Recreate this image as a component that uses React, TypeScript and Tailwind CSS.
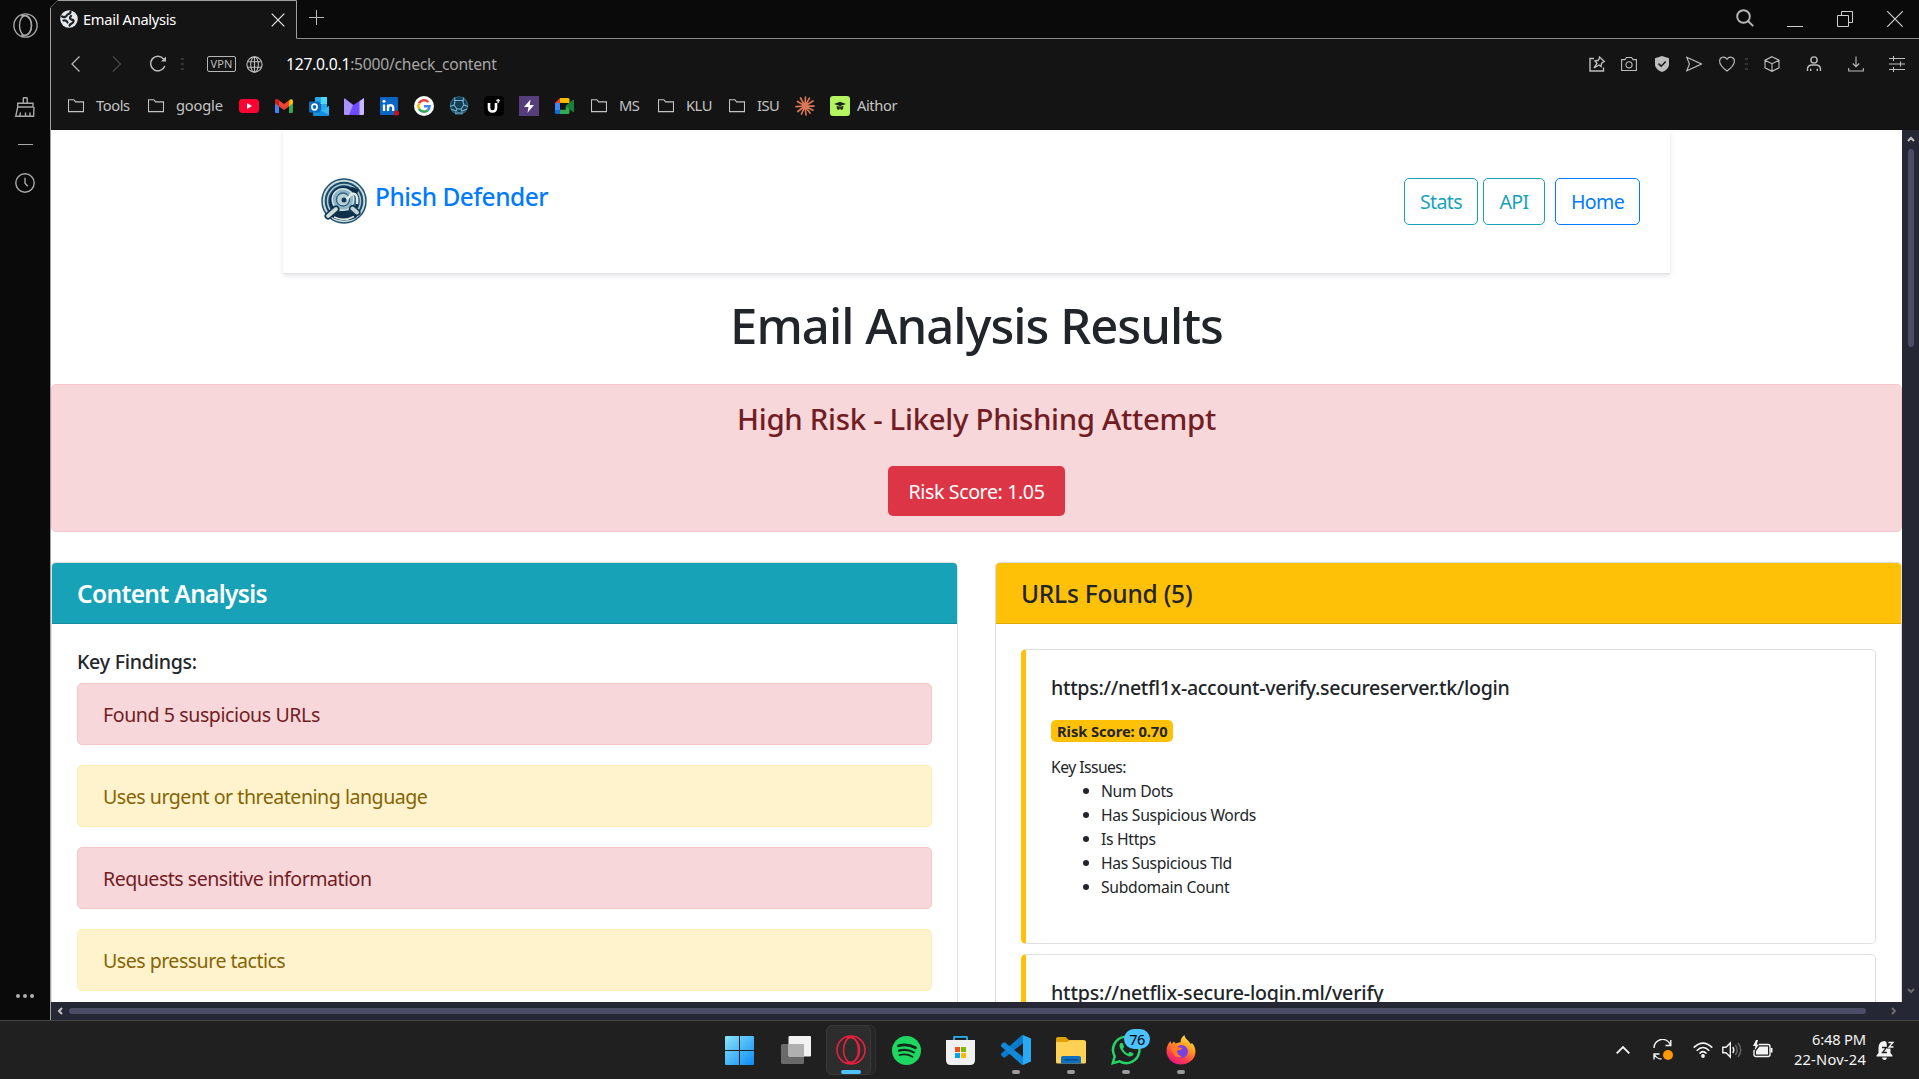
import type { ReactNode } from 'react';

function Icon({ s = 16, vb = '0 0 16 16', className = '', w = 1.1, children }: { s?: number; vb?: string; className?: string; w?: number; children: ReactNode }) {
  return (
    <svg width={s} height={s} viewBox={vb} fill="none" stroke="currentColor" strokeWidth={w} className={'block shrink-0 ' + className}>
      {children}
    </svg>
  );
}

const Folder = () => (
  <Icon>
    <path d="M.5 3.2V13.6H15.5V3.9H7.6L5.9 1.7H.5Z" />
  </Icon>
);

const Dots = ({ className }: { className: string }) => (
  <div className={'flex w-[3px] shrink-0 flex-col gap-[3px] ' + className}>
    <i className="h-0.5 w-[3px] bg-[#333]" />
    <i className="h-0.5 w-[3px] bg-[#333]" />
    <i className="h-0.5 w-[3px] bg-[#333]" />
  </div>
);

function Sidebar() {
  return (
    <aside className="flex w-[50px] shrink-0 flex-col items-center bg-[#0a0a0a] text-[#a8a8a8]">
      <Icon s={25} vb="0 0 25 25" className="mt-[13px] ml-px" w={1.4}>
        <circle cx="12.5" cy="12.5" r="11.6" />
        <ellipse cx="12.5" cy="12.5" rx="6" ry="10" />
        <path d="M8 3.2C11 .8 18.500 4 18.500 12.500S11 24.200 8 21.800" />
      </Icon>
      <Icon s={20} vb="0 0 20 20" className="mt-[59px]" w={1.4}>
        <path d="M8.300 6V1.200Q8.300.7 9 .7H11.500Q12.200.7 12.200 1.200V6M2.700 6.200H18V10H2.700ZM2.700 10L.8 19.200H18.600L19 10M5.500 15.500L4.800 19M10.500 15.500V19M15 15.500V19" />
      </Icon>
      <div className="mt-[27px] h-px w-[15px] bg-[#a8a8a8]" />
      <Icon s={20} vb="0 0 20 20" className="mt-[28px] -ml-px" w={1.4}>
        <circle cx="10" cy="10" r="9.200" />
        <path d="M10 4.800V10.300L12.800 13.200" />
      </Icon>
      <div className="mt-auto mb-[22px] flex gap-[3px]">
        <i className="size-1 rounded-full bg-[#b0b0b0]" />
        <i className="size-1 rounded-full bg-[#b0b0b0]" />
        <i className="size-1 rounded-full bg-[#b0b0b0]" />
      </div>
    </aside>
  );
}

function TabStrip() {
  return (
    <div className="flex h-[39px] items-stretch bg-[#0a0a0a] text-[#c8c8c8]">
      <div className="relative flex w-[247px] shrink-0 items-center bg-[#141414] pb-px [clip-path:polygon(8px_0,100%_0,100%_100%,0_100%,0_8px)]">
        <svg className="absolute inset-0" width="247" height="39" fill="none" stroke="#a0a0a0">
          <path d="M.5 39V7.500L7.500 .5H246.500V38.500" />
        </svg>
        <svg width="18" height="18" viewBox="0 0 18 18" className="ml-[10px]">
          <circle cx="9" cy="9" r="8.800" fill="#e6e8ec" />
          <path d="M2 6.500C4.500 8 6.500 6.500 7 5S11 4.500 10.500 1.500M11 6C10 7.500 9 7.500 10.500 9S14 9 13.500 11.500 10.500 13 9.500 15.500M3.500 10.500C5 10 7 11 7.500 12.500" fill="none" stroke="#1d2024" strokeWidth="2.200" strokeLinecap="round" />
        </svg>
        <span className="mb-px ml-[5px] text-[14.700px] leading-5 tracking-[-0.320px] whitespace-nowrap text-white">Email Analysis</span>
        <Icon s={14} vb="0 0 14 14" className="absolute top-[13px] left-[221px] text-[#e8e8e8]" w={1.200}>
          <path d="M.7.7 13.300 13.300M13.300.7.7 13.300" />
        </Icon>
      </div>
      <div className="flex flex-1 border-b border-[#8a8a8a] text-[#b8b8b8]">
        <Icon s={15} vb="0 0 15 15" className="mt-[10px] ml-[12px]" w={1}>
          <path d="M7.500 0V15M0 7.500H15" />
        </Icon>
        <div className="flex-1" />
        <Icon s={18} vb="0 0 18 18" className="mt-[9px] mr-[33px]" w={1.900}>
          <circle cx="7.500" cy="7.500" r="6.300" />
          <path d="M12 12 17.200 17.200" />
        </Icon>
        <div className="mt-[26px] mr-[34px] h-px w-4 bg-[#d0d0d0]" />
        <Icon className="mt-[11px] mr-[34px] text-[#d0d0d0]" w={1}>
          <path d="M.5 4.500H11.500V15.500H.5ZM4.500 4.500V.5H15.500V11.500H11.500" />
        </Icon>
        <Icon className="mt-[11px] mr-[16px] text-[#d0d0d0]" w={1.200}>
          <path d="M.3.3 15.700 15.700M15.700.3.3 15.700" />
        </Icon>
      </div>
    </div>
  );
}

function AddressBar() {
  return (
    <div className="flex h-[50px] items-center bg-[#141414] text-[#bdbdbd]">
      <Icon s={16} className="ml-[18px]" w={1.200}>
        <path d="M10.500.5 3 8 10.500 15.500" />
      </Icon>
      <Icon s={16} className="ml-[25px] text-[#4a4a4a]" w={1.200}>
        <path d="M3 .5 10.500 8 3 15.500" />
      </Icon>
      <Icon s={18} vb="0 0 18 18" className="ml-[23px]" w={1.500}>
        <path d="M15.800 11A7.300 7.300 0 1 1 14.800 4.200" />
        <path d="M17 1.500V6.500H12Z" fill="currentColor" stroke="none" />
      </Icon>
      <Dots className="ml-[14px]" />
      <div className="ml-[23px] flex h-4 w-[29px] shrink-0 items-center justify-center rounded-[2px] border border-[#b5b5b5] text-[11px] leading-3 tracking-[0.200px]">VPN</div>
      <Icon s={17} vb="0 0 17 17" className="ml-[10px]" w={1.100}>
        <circle cx="8.500" cy="8.500" r="7.600" />
        <ellipse cx="8.500" cy="8.500" rx="3.800" ry="7.600" />
        <path d="M8.500 1V16M1.500 5.700H15.500M1.500 11.300H15.500" />
      </Icon>
      <span className="ml-[23px] text-[15.700px] leading-6 tracking-[-0.260px] whitespace-nowrap text-[#a6a6a6]">
        <span className="text-white">127.0.0.1</span>:5000/check_content
      </span>
      <div className="flex-1" />
      <Icon className="mr-4" w={1.400}>
        <path d="M5 2.500H1V15H14.500V11.500" />
        <path d="M10.500 1 15.300 5.500 14 6 12.500 7.500 12 10.500 10 9 5 12 8 7.300 6 5 9.200 4.300 10.200 2.800Z" />
      </Icon>
      <Icon className="mr-[17px]" w={1.100}>
        <path d="M.6 3.600H4L5.500 1.500H10.500L12 3.600H15.400V14.500H.6Z" />
        <circle cx="8" cy="8.800" r="3.100" />
      </Icon>
      <Icon className="mr-[16px]" w={1.500}>
        <path d="M8 0 15 2.300V9Q14.500 13.500 8 16 1.500 13.500 1 9V2.300Z" fill="currentColor" stroke="none" />
        <path d="M4.500 7.600 7.200 10.200 11.700 5.600" stroke="#141414" />
      </Icon>
      <Icon className="mr-[17px]" w={1.100}>
        <path d="M.7 1.200 15.500 8 .7 14.800 3.500 8Z" />
      </Icon>
      <Icon className="mr-[10px]" w={1.100}>
        <path d="M8 15C4 12 .6 9 .6 5.200.6 1 5.700-.3 8 3.200 10.300-.3 15.400 1 15.400 5.200 15.400 9 12 12 8 15Z" />
      </Icon>
      <Dots className="mr-4" />
      <Icon className="mr-[26px]" w={1.100}>
        <path d="M8 .7 15 4.200V11.800L8 15.300 1 11.800V4.200ZM1 4.200 8 7.700 15 4.200M8 7.700V15.300" />
      </Icon>
      <Icon className="mr-[26px]" w={1.400}>
        <circle cx="8" cy="4" r="3.100" />
        <path d="M5 9H11M1.500 15V12.500Q2 9.500 5 9M14.500 15V12.500Q14 9.500 11 9M4.700 15V12.800M11.300 15V12.800" />
      </Icon>
      <Icon className="mr-[25px]" w={1.100}>
        <path d="M8 .5V10.500M4.800 7.500 8 10.700 11.200 7.500M.7 12V15H15.300V12" />
      </Icon>
      <Icon className="mr-[14px]" w={1.100}>
        <path d="M0 2.500H16M0 8H16M0 13.500H16M4.500 0V5M11.500 5.500V10.500M4.500 11V16" />
      </Icon>
    </div>
  );
}

function Bookmarks() {
  return (
    <div className="flex h-[41px] items-center bg-[#141414] pb-[7px] text-[14.700px] leading-6 text-[#c4c4c4]">
      <div className="flex items-center pl-[17px]">
        <Folder />
        <span className="mb-[2px] ml-[12px] w-[52px] tracking-[-0.400px]">Tools</span>
        <Folder />
        <span className="mb-[2px] ml-[12px] w-[63px] tracking-[-0.200px]">google</span>
      </div>
      <svg width="20" height="14" viewBox="0 0 20 14" className="shrink-0">
        <rect width="20" height="14" rx="3.500" fill="#ff0033" />
        <path d="M8 4 13 7 8 10Z" fill="#fff" />
      </svg>
      <svg width="18" height="14" viewBox="0 0 18 14" className="ml-4 shrink-0">
        <path d="M0 2V13Q0 14 1 14H4V5Z" fill="#4285f4" />
        <path d="M18 2V13Q18 14 17 14H14V5Z" fill="#34a853" />
        <path d="M14 1.500 15 .6Q17-.6 18 1.500V4.300L14 7.400Z" fill="#fbbc04" />
        <path d="M0 4.300V1.500Q1-.6 3 .6L9 5 14 1.300V7.400L9 11 4 7.400Z" fill="#ea4335" />
        <path d="M0 4.300V1.500Q1-.6 3 .6L4 1.400V7.400Z" fill="#c5221f" />
      </svg>
      <svg width="20" height="19" viewBox="0 0 20 19" className="ml-4 shrink-0">
        <rect x="6" width="12" height="15" rx="1" fill="#28a8ea" />
        <path d="M12 0H18V7H12Z" fill="#50d9ff" />
        <path d="M6 7H12V13H6Z" fill="#0364b8" />
        <path d="M4 10 12 13.500 20 9V18Q20 19 19 19H5Q4 19 4 18Z" fill="#1490df" />
        <path d="M12 13.500 20 9V18Z" fill="#35b8f1" />
        <rect y="4.500" width="11" height="11" rx="1" fill="#0f6cbd" />
        <ellipse cx="5.500" cy="10" rx="2.600" ry="2.900" fill="none" stroke="#fff" strokeWidth="1.600" />
      </svg>
      <svg width="20" height="17" viewBox="0 0 20 17" className="ml-[15px] shrink-0">
        <path d="M0 1Q0 0 1 .7L9.500 7 19 .5Q20 0 20 1V15.500Q20 17 18.500 17H1.500Q0 17 0 15.500Z" fill="#6d4aff" />
        <path d="M0 1Q0 0 1 .7L9 7 5 17H1.500Q0 17 0 15.500Z" fill="#a994ff" />
        <path d="M15.500 3.500 20 0V15.500Q20 17 18.500 17H15.500Z" fill="#c9b9ff" />
      </svg>
      <svg width="20" height="20" viewBox="0 0 20 20" className="ml-4 shrink-0">
        <rect y="1" width="18" height="18" rx="1" fill="#0a66c2" />
        <path d="M4 8.500V15M8 15V8.500M8 11.500Q9 8.700 11.500 9.300 13.200 9.700 13.200 12V15" fill="none" stroke="#fff" strokeWidth="2.300" />
        <circle cx="4" cy="5.300" r="1.500" fill="#fff" />
        <circle cx="16.500" cy="17" r="2.600" fill="#cc1016" />
      </svg>
      <svg width="20" height="20" viewBox="0 0 20 20" className="ml-[14px] shrink-0">
        <circle cx="10" cy="10" r="10" fill="#fff" />
        <g fill="none" strokeWidth="2.500">
          <path d="M14.200 6A5.700 5.700 0 0 0 5 7.300" stroke="#ea4335" />
          <path d="M5 7.300A5.700 5.700 0 0 0 5 12.800" stroke="#fbbc05" />
          <path d="M5 12.800A5.700 5.700 0 0 0 13.700 14.200" stroke="#34a853" />
          <path d="M10 10.200H15.600Q15.400 12.800 13.700 14.200" stroke="#4285f4" />
        </g>
      </svg>
      <svg width="20" height="20" viewBox="0 0 20 20" className="ml-[15px] shrink-0" fill="none" stroke="#7fb4cc" strokeWidth="1.100">
        <circle cx="10" cy="9.500" r="8.700" fill="#123d55" stroke="#2f6a88" />
        <path d="M5 1.500Q7 4 5 9L1 10.500M15 1.500Q13 4 15 9L19 10.500M5 4.500H15M5 9 8 13H12L15 9M2 13 7 15 8 13M18 13 13 15 12 13M7 15V18.500M13 15V18.500M8 17H12" />
      </svg>
      <svg width="20" height="20" viewBox="0 0 20 20" className="ml-[15px] shrink-0">
        <rect width="20" height="20" rx="4" fill="#000" />
        <path d="M5 7V12Q5 15.500 8.500 15.500T12 12V7" fill="none" stroke="#fff" strokeWidth="2.600" />
        <path d="M12.200 4.500H16M14.200 3V7" stroke="#ddd" strokeWidth="1.500" />
      </svg>
      <svg width="20" height="20" viewBox="0 0 20 20" className="ml-[15px] shrink-0">
        <rect width="20" height="20" fill="#563d7c" />
        <path d="M11.500 3.500 5 11H9.500L8.500 16.800 15 9H10.800Z" fill="#fff" />
      </svg>
      <svg width="19" height="16" viewBox="0 0 19 16" className="ml-4 shrink-0">
        <path d="M0 5 5 0V5Z" fill="#ea4335" />
        <path d="M5 0H13Q14.500 0 14.500 1.500V5H5Z" fill="#fbbc04" />
        <path d="M0 5H5V12H0Z" fill="#4285f4" />
        <path d="M0 12H5V16H1.500Q0 16 0 14.500Z" fill="#1967d2" />
        <path d="M5 11.500H10.500V8L14.500 5V14.500Q14.500 16 13 16H5Z" fill="#34a853" />
        <path d="M10.500 8 18 1.800Q19 1.500 19 2.500V13.500Q19 14.500 18 14L10.500 8Z" fill="#188038" />
        <path d="M5 5H10.500V11.500H5Z" fill="#141414" />
      </svg>
      <div className="flex items-center pl-[17px]">
        <Folder />
        <span className="mb-[2px] ml-[12px] w-[39px] tracking-[-0.600px]">MS</span>
        <Folder />
        <span className="mb-[2px] ml-[12px] w-[43px] tracking-[-0.500px]">KLU</span>
        <Folder />
        <span className="mb-[2px] ml-[12px] w-[38px] tracking-[-0.500px]">ISU</span>
      </div>
      <svg width="20" height="20" viewBox="0 0 20 20" className="shrink-0" stroke="#d97757" strokeWidth="1.700" strokeLinecap="round">
        <path d="M10 10 10.500 1M10 10 14.500 2.200M10 10 18 5M10 10 19 10.200M10 10 18 14.200M10 10 15 17M10 10 11 19M10 10 6.500 18M10 10 2.800 15.500M10 10 1 10.600M10 10 2.500 5.500M10 10 5.500 2" />
      </svg>
      <svg width="20" height="20" viewBox="0 0 20 20" className="ml-[15px] shrink-0">
        <rect width="20" height="20" rx="3" fill="#b4f461" />
        <path d="M4 8 10 5.800 16 8 10 10Z" fill="#1a1f14" />
        <path d="M6.500 9.800Q10 11.300 13.500 9.800L13 13.200 11.500 14 10 12.800 8.500 14 7 13.200Z" fill="#2c3520" />
      </svg>
      <span className="mb-[2px] ml-[7px] tracking-[-0.400px]">Aithor</span>
    </div>
  );
}

function Logo() {
  return (
    <svg width="46" height="46" viewBox="0 0 46 46" fill="none" className="block shrink-0">
      <circle cx="23" cy="23" r="22" fill="#cfdcdc" stroke="#1b5270" strokeWidth="1.500" />
      <circle cx="23" cy="23" r="19.300" fill="#184a69" />
      <circle cx="23" cy="23" r="16.500" stroke="#a9c6d2" strokeWidth="1.600" />
      <circle cx="23" cy="23" r="13.500" fill="#2d6585" stroke="#0d2c47" strokeWidth="2" />
      <circle cx="22" cy="21.500" r="10.800" fill="#8db5c6" stroke="#d3e1e2" strokeWidth="1.400" />
      <circle cx="22" cy="21.500" r="6.500" fill="#b9d1d8" stroke="#2f6280" strokeWidth="1.300" />
      <path d="M23 21.500Q26 22 28 19 31 14 34.500 16.500 37 19 36 26" stroke="#e5ece6" strokeWidth="2.400" />
      <path d="M30 10.500 37 13.500" stroke="#0c2a42" strokeWidth="4" />
      <circle cx="23" cy="22" r="2.500" fill="#123a57" />
      <path d="M9 36Q23 30 38 35L35 40Q23 45 12 40Z" fill="#0e304c" />
      <path d="M13 39Q23 44 33 38.500" stroke="#dbe6e2" strokeWidth="1.800" />
      <path d="M7 38 15 31" stroke="#123650" strokeWidth="7" strokeLinecap="round" />
      <path d="M7 38 15 31" stroke="#cfdcd8" strokeWidth="3.800" strokeLinecap="round" />
      <path d="M31.500 30.500 36 34.500" stroke="#123650" strokeWidth="7" strokeLinecap="round" />
      <path d="M31.500 30.500 36 34.500" stroke="#c5d6d8" strokeWidth="4" strokeLinecap="round" />
    </svg>
  );
}

function NavCard() {
  return (
    <div className="mr-[232px] ml-[232px] flex h-[144px] shrink-0 justify-between border-b border-[#dee2e6] bg-white pr-[30px] pl-[38px] shadow-[0_2px_5px_rgba(0,0,0,0.100)]">
      <div className="flex pt-[48px]">
        <Logo />
        <span className="mt-px ml-[8px] text-[24.500px] leading-9 font-medium tracking-[-0.520px] text-[#007bff]">Phish Defender</span>
      </div>
      <div className="flex pt-12 text-[19.600px] leading-[45px] tracking-[-0.650px]">
        <a className="flex h-[47px] w-[74px] justify-center rounded-[5px] border border-[#17a2b8] text-[#17a2b8]">Stats</a>
        <a className="ml-[5px] flex h-[47px] w-[62px] justify-center rounded-[5px] border border-[#17a2b8] text-[#17a2b8]">API</a>
        <a className="ml-[10px] flex h-[47px] w-[85px] justify-center rounded-[5px] border border-[#007bff] text-[#007bff]">Home</a>
      </div>
    </div>
  );
}

const danger = 'border-[#f5c6cb] bg-[#f8d7da] text-[#721c24]';
const warning = 'border-[#ffeeba] bg-[#fff3cd] text-[#856404]';

const findings = [
  { text: 'Found 5 suspicious URLs', tone: danger, track: 'tracking-[-0.430px]' },
  { text: 'Uses urgent or threatening language', tone: warning, track: 'tracking-[-0.490px]' },
  { text: 'Requests sensitive information', tone: danger, track: 'tracking-[-0.510px]' },
  { text: 'Uses pressure tactics', tone: warning, track: 'tracking-[-0.520px]' },
];

const issues = ['Num Dots', 'Has Suspicious Words', 'Is Https', 'Has Suspicious Tld', 'Subdomain Count'];

function ContentCard() {
  return (
    <section className="h-[600px] w-[907px] rounded-[5px] border border-black/[.125]">
      <h2 className="h-[61px] rounded-t-[4px] border-b border-black/[.125] bg-[#17a2b8] pl-[25px] text-[24.500px] leading-[61px] font-semibold tracking-[-0.660px] text-white">Content Analysis</h2>
      <div className="px-[25px] pt-[25px]">
        <h3 className="mb-[8px] h-[26px] text-[19.600px] leading-[26px] font-medium tracking-[-0.260px]">Key Findings:</h3>
        <div className="flex flex-col gap-5">
          {findings.map((f) => (
            <div key={f.text} className={`h-[62px] rounded-[5px] border pl-[25px] text-[19.600px] leading-[61px] ${f.tone} ${f.track}`}>
              {f.text}
            </div>
          ))}
        </div>
      </div>
    </section>
  );
}

function UrlsCard() {
  return (
    <section className="h-[600px] w-[907px] rounded-[5px] border border-black/[.125]">
      <h2 className="h-[61px] rounded-t-[4px] border-b border-black/[.125] bg-[#ffc107] pl-[25px] text-[24.500px] leading-[61px] font-medium tracking-[-0.220px]">URLs Found (5)</h2>
      <div className="flex flex-col gap-[10px] px-[25px] pt-[25px]">
        <article className="h-[295px] rounded-[5px] border border-l-5 border-black/[.125] border-l-[#ffc107] pt-[25px] pl-[25px]">
          <h3 className="h-[30px] text-[19.600px] leading-[26px] font-medium tracking-[-0.310px]">https://netfl1x-account-verify.secureserver.tk/login</h3>
          <span className="mt-[15px] block h-[22px] w-[122px] rounded-[5px] bg-[#ffc107] pl-[6px] text-[14.700px] leading-[23px] font-bold tracking-[-0.060px] whitespace-nowrap">Risk Score: 0.70</span>
          <div className="mt-[13px] text-[15.700px] leading-6 tracking-[-0.300px]">
            <p className="tracking-[-0.540px]">Key Issues:</p>
            <ul>
              {issues.map((i) => (
                <li key={i} className="flex items-center pl-[32px]">
                  <i className="mr-3 size-[6px] rounded-full bg-[#212529]" />
                  {i}
                </li>
              ))}
            </ul>
          </div>
        </article>
        <article className="h-[295px] rounded-[5px] border border-l-5 border-black/[.125] border-l-[#ffc107] pt-[25px] pl-[25px]">
          <h3 className="text-[19.600px] leading-[26px] font-medium tracking-[-0.180px]">https://netflix-secure-login.ml/verify</h3>
        </article>
      </div>
    </section>
  );
}

function Page() {
  return (
    <main className="flex h-[872px] w-[1851px] flex-col overflow-hidden bg-white text-[#212529]">
      <NavCard />
      <h1 className="h-[110px] shrink-0 pt-[21px] text-center text-[49px] leading-[60px] font-medium tracking-[-0.960px]">Email Analysis Results</h1>
      <div className="flex h-[148px] shrink-0 flex-col items-center rounded-[5px] border border-[#f5c6cb] bg-[#f8d7da] pt-[14px] text-[#721c24]">
        <h2 className="h-10 text-[29.400px] leading-10 font-medium tracking-[-0.300px]">High Risk - Likely Phishing Attempt</h2>
        <span className="mt-[27px] h-[50px] w-[177px] rounded-[5px] bg-[#dc3545] text-center text-[19.600px] leading-[51px] tracking-[-0.390px] text-white">Risk Score: 1.05</span>
      </div>
      <div className="mt-[30px] flex shrink-0 justify-between">
        <ContentCard />
        <UrlsCard />
      </div>
    </main>
  );
}

const Pill = () => <i className="absolute bottom-[5px] left-[25px] h-1 w-2 rounded-full bg-[#9a9a9a]" />;

function TaskCell({ children }: { children: ReactNode }) {
  return <div className="relative flex h-full w-[55px] shrink-0 items-center justify-center">{children}</div>;
}

function Taskbar() {
  return (
    <footer className="flex h-[59px] border-t border-[#464646] bg-[#202020] text-white">
      <div className="flex pl-[712px]">
        <TaskCell>
          <svg width="29" height="29" viewBox="0 0 29 29">
            <defs>
              <linearGradient id="win" x1="0" y1="0" x2="1" y2="1">
                <stop stopColor="#8be4fb" />
                <stop offset="1" stopColor="#0a8cf5" />
              </linearGradient>
            </defs>
            <path fill="url(#win)" d="M1 0H14V14H0V1Q0 0 1 0ZM15 0H28Q29 0 29 1V14H15ZM0 15H14V29H1Q0 29 0 28ZM15 15H29V28Q29 29 28 29H15Z" />
          </svg>
        </TaskCell>
        <TaskCell>
          <svg width="30" height="28" viewBox="0 0 30 28" className="ml-[2px]">
            <rect y="8" width="23" height="20" rx="1.500" fill="#6a6a6a" />
            <rect x="7.500" width="22.500" height="20.500" rx="1" fill="#f2f2f2" />
            <path d="M7.500 8H23V20.500H8.500L7.500 19.500Z" fill="#b0b0b0" />
          </svg>
        </TaskCell>
        <TaskCell>
          <div className="absolute top-1 left-[6px] h-[50px] w-[48px] rounded-md border border-[#333] bg-[#262626]" />
          <div className="absolute top-1 left-1 h-[50px] w-[45px] rounded-md border border-[#3a3a3a] bg-[#2d2d2d]" />
          <svg width="30" height="30" viewBox="0 0 30 30" fill="none" stroke="#e8203f" strokeWidth="1.600" className="relative ml-[2px]">
            <circle cx="15" cy="15" r="14" />
            <ellipse cx="15" cy="15" rx="7.500" ry="12.500" />
            <path d="M11 3.200C15-1 23.500 6 23.500 15S15 31 11 26.800" />
          </svg>
          <i className="absolute bottom-[5px] left-[19px] h-1 w-5 rounded-full bg-[#4cc2ff]" />
        </TaskCell>
        <TaskCell>
          <svg width="29" height="29" viewBox="0 0 29 29" fill="none" stroke="#14251a" strokeLinecap="round" className="ml-[3px]">
            <circle cx="14.500" cy="14.500" r="14.500" fill="#1ed760" stroke="none" />
            <path d="M6.500 9.800Q15.500 7.300 23.500 11.800" strokeWidth="2.700" />
            <path d="M7 14.600Q15 12.500 21.800 16.400" strokeWidth="2.200" />
            <path d="M7.500 19Q14.500 17.300 20.500 20.800" strokeWidth="1.800" />
          </svg>
        </TaskCell>
        <TaskCell>
          <svg width="29" height="29" viewBox="0 0 29 29" className="ml-[2px]">
            <path d="M8 7V1.500Q8 .8 8.700 .8H20.300Q21 .8 21 1.500V7" fill="none" stroke="#27b1ee" strokeWidth="1.800" />
            <path d="M0 4H29V24Q29 29 24 29H5Q0 29 0 24Z" fill="#f1f1f1" />
            <path d="M9 11H14V16H9Z" fill="#f25022" />
            <path d="M15 11H20V16H15Z" fill="#7fba00" />
            <path d="M9 17H14V22H9Z" fill="#00a4ef" />
            <path d="M15 17H20V22H15Z" fill="#ffb900" />
          </svg>
        </TaskCell>
        <TaskCell>
          <svg width="30" height="30" viewBox="0 0 30 30" className="ml-[3px]">
            <path d="M22 0 30 3.500V26.500L22 30Z" fill="#2aa9f2" />
            <path d="M22 0V8L4 22.500 2.500 22.500 0 20.300V18.800L20.500.5Z" fill="#0a7acc" />
            <path d="M22 30V22L4 7.500H2.500L0 9.700V11.200L20.500 29.500Z" fill="#1289d8" />
          </svg>
          <Pill />
        </TaskCell>
        <TaskCell>
          <svg width="30" height="27" viewBox="0 0 30 27" className="ml-[3px]">
            <path d="M0 2Q0 0 2 0H9.500L13 3H28V10H0Z" fill="#e0a008" />
            <path d="M0 5H11L14 3.200H28.500Q30 3.200 30 5V25Q30 26.500 28.500 26.500H1.500Q0 26.500 0 25Z" fill="#ffd154" />
            <path d="M5 26.500V21Q5 19 7 19H23Q25 19 25 21V26.500Z" fill="#0f6fc0" />
            <path d="M8.500 22.800H21.500" stroke="#0a4a86" strokeWidth="1.400" />
          </svg>
          <Pill />
        </TaskCell>
        <TaskCell>
          <svg width="30" height="30" viewBox="0 0 30 30" fill="none" stroke="#25d366" strokeWidth="2.500" className="ml-[3px]">
            <path d="M1.800 28.200 3.700 21.300A13.200 13.200 0 1 1 8.600 26.300Z" />
            <path d="M9.500 8Q7.500 10 9.500 14 12.500 19.500 18 21.500 21 22 22.500 19.500L22.500 18.500 18.800 16.700 17 18.700Q13.500 17.500 11.800 13.800L13.200 12 11.500 8Z" fill="#25d366" stroke="none" />
          </svg>
          <span className="absolute top-2 left-[27px] flex h-5 w-[26px] items-center justify-center rounded-full bg-[#4cc2ff] text-[14.500px] leading-5 tracking-[-0.500px] text-black">76</span>
          <Pill />
        </TaskCell>
        <TaskCell>
          <svg width="30" height="30" viewBox="0 0 30 30" className="ml-[3px]">
            <defs>
              <linearGradient id="fox" x1=".8" y1="0" x2=".3" y2="1">
                <stop stopColor="#fff04a" />
                <stop offset=".4" stopColor="#ff9a1f" />
                <stop offset=".75" stopColor="#ff3b4c" />
                <stop offset="1" stopColor="#e3138a" />
              </linearGradient>
            </defs>
            <path d="M15 29.500C6 29.500.5 23 .5 16 .5 11 2.500 8 4.500 6L5.500 9 8 6.500 9.500 8.500 15 7C14 5 16 2 18.500 0 18.500 3.500 23 5.500 24.500 9L26 8Q29.500 12 29.500 16.500C29.500 24 23 29.500 15 29.500Z" fill="url(#fox)" />
            <circle cx="15.500" cy="16.500" r="6.500" fill="#7a3fe0" />
            <path d="M5 11Q9 9 13 12.500L17 13Q14 15.500 11 15.500 11 20 16 21.500 11 23.500 8 20 5 16 5 11Z" fill="#ff7a22" />
          </svg>
          <Pill />
        </TaskCell>
      </div>
      <div className="ml-auto flex items-center pr-[24px] text-[#f4f4f4]">
        <Icon s={14} vb="0 0 14 14" w={1.900}>
          <path d="M.7 10.300 7 4 13.300 10.300" />
        </Icon>
        <Icon s={22} vb="0 0 22 22" className="ml-[22px]" w={1.400}>
          <path d="M2 9A8.500 8.500 0 0 1 18.500 6M18.800 1V6.500H13.500M2 20.500V15H7.500M2.200 15.500Q5 20 9.500 20" />
          <circle cx="16" cy="16" r="5" fill="#ff9900" stroke="none" />
        </Icon>
        <Icon s={20} vb="0 0 20 20" className="ml-[19px]" w={1.600}>
          <path d="M.7 7.600Q10-1.500 19.300 7.600M3.700 10.700Q10 4.200 16.300 10.700M6.500 13.500Q10 9.800 13.500 13.500" />
          <circle cx="10" cy="16" r="1.900" fill="currentColor" stroke="none" />
        </Icon>
        <Icon s={20} vb="0 0 20 20" className="ml-[9px]" w={1.400}>
          <path d="M.8 7.300H4L8.300 3V17L4 12.700H.8ZM10.800 7Q12.800 10 10.800 13" />
          <path d="M13.300 5Q17 10 13.300 15M16 3Q21.500 10 16 17" stroke="#666" />
        </Icon>
        <Icon s={20} vb="0 0 20 20" className="ml-[11px]" w={1.400}>
          <path d="M6 4.500H15Q17 4.500 17 6.500V14.500Q17 16.500 15 16.500H3Q1 16.500 1 14.500V10" />
          <path d="M6.500 6.500H15V14.500H3V11ZM17.500 8H19.500V12.500H17.500ZM3 0 0 6H2.500L1.500 10.500 6 4.500H3.800L5 0Z" fill="currentColor" stroke="none" />
        </Icon>
        <div className="mb-[2px] ml-[20px] w-[73px] text-right text-[14.700px] leading-5 whitespace-nowrap">
          <div className="tracking-[-0.150px]">6:48 PM</div>
          <div className="tracking-[0.200px]">22-Nov-24</div>
        </div>
        <Icon s={19} vb="0 0 19 19" className="ml-[10px]" w={1.300}>
          <path d="M9 0Q2.500 0 2.500 7V12L.5 14.500V15.500H16.500V14.500L14.500 12V5ZM6 16.500H11Q10.500 19 8.500 19T6 16.500Z" fill="currentColor" stroke="none" />
          <path d="M10.500 1H18V7.500H11Z" fill="#202020" stroke="none" />
          <path d="M12.500 1.500H17L13 6H17.500" />
          <path d="M6 6.500H10.500L6.500 11.500H11" stroke="#202020" />
        </Icon>
      </div>
    </footer>
  );
}

export default function App() {
  return (
    <div className="flex h-[1079px] w-[1919px] flex-col overflow-hidden bg-[#0a0a0a] font-['Noto_Sans','Open_Sans',sans-serif]">
      <div className="flex h-[1020px] shrink-0">
        <Sidebar />
        <div className="flex flex-1 flex-col">
          <TabStrip />
          <div className="flex flex-1 flex-col border-l border-[#a0a0a0] bg-[#141414]">
            <AddressBar />
            <Bookmarks />
            <div className="flex h-[872px]">
              <Page />
              <div className="flex w-[17px] flex-col items-center bg-[#252834] pb-[7px] text-[#c4c4c4]">
                <Icon s={8} vb="0 0 8 8" className="mt-[5px]" w={2}>
                  <path d="M1 6 4 3 7 6" />
                </Icon>
                <div className="mt-[6px] h-[198px] w-[6px] rounded-full bg-[#4b4d66]" />
                <Icon s={8} vb="0 0 8 8" className="mt-auto text-[#6b6b70]" w={2}>
                  <path d="M1 2 4 5 7 2" />
                </Icon>
              </div>
            </div>
            <div className="flex h-[18px] items-center bg-[#252834] pl-[5px] text-[#c4c4c4]">
              <Icon s={8} vb="0 0 8 8" w={2}>
                <path d="M6 1 3 4 6 7" />
              </Icon>
              <div className="ml-[5px] h-[6px] w-[1797px] rounded-full bg-[#4b4d66]" />
              <Icon s={8} vb="0 0 8 8" className="ml-[24px] text-[#6b6b70]" w={2}>
                <path d="M2 1 5 4 2 7" />
              </Icon>
            </div>
          </div>
        </div>
      </div>
      <Taskbar />
    </div>
  );
}
